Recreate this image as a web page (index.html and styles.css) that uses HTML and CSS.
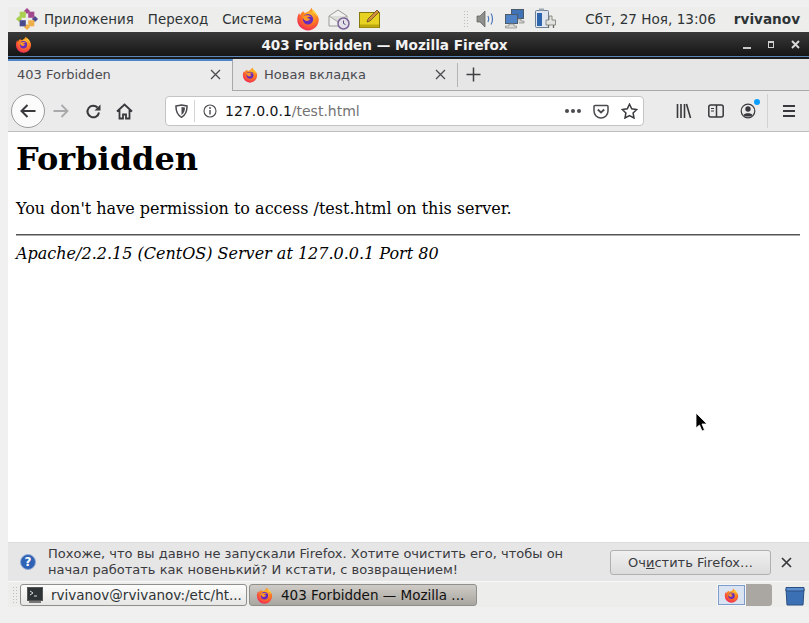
FILE: index.html
```html
<!DOCTYPE html>
<html lang="ru">
<head>
  <meta charset="UTF-8" />
  <title>403 Forbidden — Mozilla Firefox</title>
  <link rel="stylesheet" href="styles.css">
</head>
<body>
  <svg class="defs" width="0" height="0">
    <defs>
      <radialGradient id="ffbody" cx="0.6" cy="0.3" r="0.85">
        <stop offset="0" stop-color="#ffbd2e"/>
        <stop offset="0.45" stop-color="#ff7a1f"/>
        <stop offset="0.8" stop-color="#f2344f"/>
        <stop offset="1" stop-color="#e0287e"/>
      </radialGradient>
      <symbol id="firefox" viewBox="0 0 24 24">
        <path d="M15.5 .8c.6 2.4 2 3 3.6 4.6 2.3 2.2 3.6 4.600 3.600 7.400a10.700 10.700 0 0 1-21.400 0c0-2.700.6-4.800 1.900-6.800.1 1 .5 1.700 1.100 2.200.4-1.900 1.600-3.200 3.300-4 .1 1 .5 1.600 1.200 1.800 2.800-.6 5.300-2.400 6.700-5.200z" fill="url(#ffbody)"/>
        <path d="M16.500 2.500c2.800 2 5 5 4.900 8.300-1-2.600-2.700-4.200-4.500-5-.3-1.200-.6-2.200-.4-3.300z" fill="#ffd53d"/>
        <circle cx="12" cy="12.300" r="5.200" fill="#6a2bbd"/>
        <path d="M7 9.500c2.500-1.500 6.500-1.800 8.500.5-1.800-.6-3.500-.2-4.500 1 1.500.2 2.500.6 3 1.300-1 1.800-4 2.200-5.500.8C7.300 12 6.800 10.800 7 9.500z" fill="#ff9a24"/>
      </symbol>
    </defs>
  </svg>

  <div class="panel top-panel">
    <div class="menus">
      <svg class="centos" width="22" height="22" viewBox="0 0 18 18">
        <path d="M9 0l2.500 2.500L9 5 6.500 2.500z" fill="#a2488f"/>
        <path d="M18 9l-2.500 2.500L13 9l2.500-2.500z" fill="#4a4a8c"/>
        <path d="M9 18l-2.500-2.500L9 13l2.500 2.500z" fill="#efb04a"/>
        <path d="M0 9l2.500-2.500L5 9l-2.500 2.500z" fill="#a9d04e"/>
        <rect x="3" y="3" width="5" height="5" fill="#a9d04e"/>
        <rect x="10" y="3" width="5" height="5" fill="#a2488f"/>
        <rect x="3" y="10" width="5" height="5" fill="#4a4a8c"/>
        <rect x="10" y="10" width="5" height="5" fill="#efb04a"/>
      </svg>
      <span class="menu">Приложения</span>
      <span class="menu">Переход</span>
      <span class="menu">Система</span>
    </div>
    <div class="launchers">
      <svg width="24" height="24"><use href="#firefox"/></svg>
      <svg width="24" height="24" viewBox="0 0 24 24">
        <path d="M2 9l9-6 9 6v10H2z" fill="#f1f1ef" stroke="#9b9b98"/>
        <path d="M2 9l9 6 9-6" fill="#dcdcd8" stroke="#a8a8a4"/>
        <circle cx="16.500" cy="16.500" r="5.500" fill="#e4e0ea" stroke="#7b6496" stroke-width="1.500"/>
        <path d="M16.500 13.500v3l2 1" fill="none" stroke="#5d4a78"/>
      </svg>
      <svg width="24" height="24" viewBox="0 0 24 24">
        <rect x="1.500" y="5.500" width="20" height="15" fill="#e8d221" stroke="#86770f"/>
        <rect x="2" y="17.500" width="19" height="3" fill="#bca90d"/>
        <path d="M9 15l1-3 9-9 2 2-9 9z" fill="#d38f3a" stroke="#5e4a22" stroke-width=".8"/>
      </svg>
    </div>
    <div class="tray">
      <span class="grip"></span>
      <svg width="22" height="22" viewBox="0 0 22 22">
        <path d="M3 8h3l5-5v16l-5-5H3z" fill="#8e8e8b" stroke="#5c5c5a" stroke-width=".7"/>
        <path d="M14 8c1 2 1 4 0 6M17 5.500c2 3 2 8 0 11" fill="none" stroke="#4f77b8" stroke-width="1.200"/>
      </svg>
      <svg width="24" height="22" viewBox="0 0 24 22">
        <rect x="8.500" y="1.500" width="12" height="9" fill="#3f73b5" stroke="#4d5a6c"/>
        <path d="M12 11h6v2h3v2h-5" fill="#d5d5d2" stroke="#85857f" stroke-width=".7"/>
        <rect x="2.500" y="6.500" width="12" height="9" fill="#4f83c5" stroke="#4d5a6c"/>
        <path d="M6 16h5v2h2.500v2H2.500v-2H6z" fill="#dadad7" stroke="#85857f" stroke-width=".7"/>
      </svg>
      <svg width="24" height="24" viewBox="0 0 24 24">
        <rect x="1.500" y="3.500" width="13" height="17" rx="1" fill="#dfe6ef" stroke="#6e7f93"/>
        <rect x="3" y="6" width="5" height="13" fill="#2d66ad"/>
        <rect x="5" y="1.500" width="5" height="2" fill="#9aa6b4"/>
        <path d="M15 9h3v4h3.500v5H12v-5h3z" fill="#e2e2df" stroke="#77776f" stroke-width=".8"/>
        <path d="M14.500 18v3M19.500 18v3" stroke="#6a6a64" stroke-width="1.300"/>
      </svg>
      <span class="clock">Сбт, 27 Ноя, 13:06</span>
      <span class="user">rvivanov</span>
    </div>
  </div>

  <div class="window">
    <div class="titlebar">
      <svg class="title-icon" width="17" height="17"><use href="#firefox"/></svg>
      <span class="title-text">403 Forbidden — Mozilla Firefox</span>
      <div class="wm-buttons">
        <span class="wm-min"></span>
        <span class="wm-max"></span>
        <svg width="9" height="9" viewBox="0 0 9 9"><path d="M1 1l7 7M8 1L1 8" stroke="#d8d8d8" stroke-width="2"/></svg>
      </div>
    </div>

    <div class="tabbar">
      <div class="tab active">
        <span class="tab-label">403 Forbidden</span>
        <svg class="tab-close" width="11" height="11" viewBox="0 0 11 11"><path d="M1 1l9 9M10 1l-9 9" stroke="#4a4a4f" stroke-width="1.300"/></svg>
      </div>
      <div class="tab">
        <svg width="16" height="16"><use href="#firefox"/></svg>
        <span class="tab-label">Новая вкладка</span>
        <svg class="tab-close" width="11" height="11" viewBox="0 0 11 11"><path d="M1 1l9 9M10 1l-9 9" stroke="#4a4a4f" stroke-width="1.300"/></svg>
      </div>
      <span class="tab-sep"></span>
      <svg class="new-tab" width="15" height="15" viewBox="0 0 15 15"><path d="M7.500 .5v14M.5 7.500h14" stroke="#3f3f44" stroke-width="1.500"/></svg>
    </div>

    <div class="toolbar">
      <div class="back">
        <svg width="18" height="18" viewBox="0 0 18 18"><path d="M16.500 9H2.500M8.500 3L2.500 9l6 6" fill="none" stroke="#38383d" stroke-width="2"/></svg>
      </div>
      <svg class="forward" width="18" height="18" viewBox="0 0 18 18"><path d="M1.500 9h14M9.500 3l6 6-6 6" fill="none" stroke="#a9a9ab" stroke-width="1.800"/></svg>
      <svg class="reload" width="17" height="17" viewBox="0 0 17 17"><path d="M14 9.500A5.800 5.800 0 1 1 12.500 4.500" fill="none" stroke="#38383d" stroke-width="2"/><path d="M15.500 1.500v6h-6z" fill="#38383d"/></svg>
      <svg class="home" width="17" height="17" viewBox="0 0 17 17"><path d="M1 8.500l7.500-7 7.500 7M3.500 7v8.500h3.500v-4h3v4h3.500V7" fill="none" stroke="#38383d" stroke-width="1.800"/></svg>
      <div class="urlbar">
        <svg class="shield" width="13" height="14" viewBox="0 0 13 14"><path d="M1 2l5.500-1L12 2c.2 5-1.200 9-5.500 11.300C2.200 11 .8 7 1 2z" fill="none" stroke="#4a4a4f" stroke-width="1.500"/><path d="M6.500 3l3.500.6c0 3.300-1 5.600-3.500 7.300z" fill="#4a4a4f"/></svg>
        <span class="url-sep"></span>
        <svg class="info" width="14" height="14" viewBox="0 0 14 14"><circle cx="7" cy="7" r="6" fill="none" stroke="#4a4a4f" stroke-width="1.100"/><path d="M7 6v4.500" stroke="#4a4a4f" stroke-width="1.400"/><circle cx="7" cy="4" r=".9" fill="#4a4a4f"/></svg>
        <span class="url"><span class="host">127.0.0.1</span>/test.html</span>
        <span class="dots"><i></i><i></i><i></i></span>
        <svg class="pocket" width="16" height="15" viewBox="0 0 16 15"><path d="M2 1.500h12a1 1 0 0 1 1 1V7a7 7 0 0 1-14 0V2.500a1 1 0 0 1 1-1z" fill="none" stroke="#4a4a4f" stroke-width="1.500"/><path d="M4.800 5.500L8 8.500l3.200-3" fill="none" stroke="#4a4a4f" stroke-width="1.800"/></svg>
        <svg class="star" width="17" height="16" viewBox="0 0 17 16"><path d="M8.500 1.200l2.200 4.600 5 .7-3.600 3.500.9 5-4.500-2.400L4 15l.9-5L1.300 6.500l5-.7z" fill="none" stroke="#38383d" stroke-width="1.500"/></svg>
      </div>
      <svg class="library" width="16" height="16" viewBox="0 0 16 16"><path d="M1.500 1v14M5 1v14M8.500 1v14M10.500 1l4 14" stroke="#38383d" stroke-width="1.600"/></svg>
      <svg class="sidebar-btn" width="16" height="14" viewBox="0 0 16 14"><rect x=".8" y="1" width="14.400" height="12" rx="2" fill="none" stroke="#38383d" stroke-width="1.500"/><path d="M8.500 1v12" stroke="#38383d" stroke-width="1.500"/><path d="M3 4.500h3M3 7h3" stroke="#38383d"/></svg>
      <div class="account">
        <svg width="16" height="16" viewBox="0 0 16 16"><circle cx="8" cy="8" r="6.800" fill="none" stroke="#38383d" stroke-width="1.200"/><circle cx="8" cy="6" r="2.700" fill="#38383d"/><path d="M3.500 12c1-2.500 8-2.500 9 0-1.500 2-7.500 2-9 0z" fill="#38383d"/></svg>
        <span class="badge"></span>
      </div>
      <span class="toolbar-sep"></span>
      <div class="hamburger"><i></i><i></i><i></i></div>
    </div>

    <div class="content">
      <h1>Forbidden</h1>
      <p>You don't have permission to access /test.html on this server.</p>
      <hr>
      <address>Apache/2.2.15 (CentOS) Server at 127.0.0.1 Port 80</address>
      <svg class="cursor" width="14" height="21" viewBox="0 0 14 21"><path d="M1 1v15l3.500-3 2.500 6 2.500-1-2.500-6h5z" fill="#000" stroke="#fff" stroke-width=".8"/></svg>
    </div>

    <div class="notice">
      <svg class="help" width="16" height="16" viewBox="0 0 16 16"><circle cx="8" cy="8" r="7.500" fill="#2f62b5" stroke="#8fa9d4"/><text x="8" y="12" text-anchor="middle" class="help-mark">?</text></svg>
      <p class="notice-text">Похоже, что вы давно не запускали Firefox. Хотите очистить его, чтобы он начал работать как новенький? И кстати, с возвращением!</p>
      <button class="notice-btn">Оч<span class="mnemonic">и</span>стить Firefox…</button>
      <svg class="notice-close" width="11" height="11" viewBox="0 0 11 11"><path d="M1 1l9 9M10 1l-9 9" stroke="#38383d" stroke-width="1.700"/></svg>
    </div>
  </div>

  <div class="panel bottom-panel">
    <span class="grip"></span>
    <div class="task">
      <svg width="16" height="16" viewBox="0 0 16 16"><rect x=".5" y=".5" width="15" height="13" fill="#2e3436" stroke="#555"/><path d="M3 4l3 2-3 2M7 9h3" fill="none" stroke="#ddd"/><rect x="2" y="14" width="12" height="2" fill="#777"/></svg>
      <span>rvivanov@rvivanov:/etc/ht...</span>
    </div>
    <div class="task current">
      <svg width="17" height="17"><use href="#firefox"/></svg>
      <span>403 Forbidden — Mozilla ...</span>
    </div>
    <div class="pager">
      <div class="workspace on"><svg width="15" height="15"><use href="#firefox"/></svg></div>
      <div class="workspace"></div>
    </div>
    <svg class="trash" width="20" height="21" viewBox="0 0 20 21"><path d="M1 4h18l-1 16H2z" fill="#3c70b4" stroke="#2a4f82"/><path d="M1 2.500h18V6H1z" fill="#5b8fd0" stroke="#2a4f82"/></svg>
  </div>
</body>
</html>
```
FILE: styles.css
```css
html, body {
  margin: 0;
  height: 100%;
}
body {
  box-sizing: border-box;
  width: 809px;
  height: 623px;
  padding: 7px 0 0 8px;
  background: #f0f0f0;
  font-family: "DejaVu Sans", sans-serif;
  overflow: hidden;
  position: relative;
}
.defs {
  position: absolute;
}
svg {
  flex: none;
  display: block;
}

/* panels */
.panel {
  display: flex;
  align-items: center;
  background: #ededeb;
  color: #2e3436;
  font-size: 13.4px;
}
.top-panel {
  height: 24px;
}
.menus {
  display: flex;
  align-items: center;
  padding-left: 8px;
}
.centos {
  margin-right: 6px;
}
.menu {
  margin-right: 14px;
}
.launchers {
  display: flex;
  align-items: center;
  gap: 7px;
}
.tray {
  display: flex;
  align-items: center;
  margin-left: auto;
  padding-right: 9px;
  font-size: 13.6px;
}
.grip {
  width: 6px;
  height: 18px;
  background-image: radial-gradient(#bdbdb9 1px, transparent 1px);
  background-size: 3px 3px;
}
.tray svg {
  margin-left: 5px;
}
.tray svg + svg {
  margin-left: 7px;
}
.clock {
  margin-left: 27px;
}
.user {
  margin-left: 18px;
  font-weight: bold;
}

/* window */
.window {
  display: flex;
  flex-direction: column;
  height: 550px;
  margin-top: 1px;
}
.titlebar {
  display: flex;
  align-items: center;
  height: 27px;
  flex: none;
  position: relative;
  background: linear-gradient(#3a3a3a, #141414);
  border-bottom: 2px solid #1c1c1c;
  box-shadow: inset 0 -1px 0 #5b86b8;
  box-sizing: border-box;
  color: #f2f2f2;
  font-size: 13.6px;
  font-weight: bold;
}
.title-icon {
  margin-left: 7px;
}
.title-text {
  position: absolute;
  left: 0;
  right: 0;
  text-align: center;
  transform: translateX(-24px);
}
.wm-buttons {
  display: flex;
  align-items: center;
  gap: 17px;
  margin-left: auto;
  margin-right: 9px;
}
.wm-min {
  width: 8px;
  height: 2px;
  margin-top: 6px;
  background: #c8c8c8;
}
.wm-max {
  width: 4px;
  height: 4px;
  border: 1px solid #d0d0d0;
  border-top-width: 2px;
}

.tabbar {
  display: flex;
  align-items: center;
  height: 32px;
  flex: none;
  box-sizing: border-box;
  background: #e6e6e6;
  border-bottom: 1px solid #a8a8a8;
  color: #4a4a4f;
  font-size: 13px;
}
.tab {
  display: flex;
  align-items: center;
  box-sizing: border-box;
  width: 224px;
  height: 31px;
  padding: 0 11px 0 9px;
}
.tab + .tab {
  padding-left: 9px;
  gap: 6px;
}
.tab.active {
  width: 225px;
  height: 32px;
  padding-bottom: 3px;
  border-top: 2px solid #4a86c8;
  border-right: 1px solid #a8a8a8;
  background: #ebebeb;
}
.tab-close {
  margin-left: auto;
}
.tab-sep {
  width: 1px;
  height: 24px;
  background: #b4b4b4;
}
.new-tab {
  margin-left: 8px;
}

.toolbar {
  display: flex;
  align-items: center;
  flex: none;
  height: 41px;
  box-sizing: border-box;
  background: #ebebeb;
  border-bottom: 1px solid #bdbdbd;
  padding-left: 3px;
}
.back {
  display: flex;
  align-items: center;
  justify-content: center;
  box-sizing: border-box;
  width: 34px;
  height: 34px;
  border: 1px solid #9a9a9a;
  border-radius: 50%;
  background: #fbfbfb;
}
.forward {
  margin-left: 7px;
}
.reload {
  margin-left: 15px;
}
.home {
  margin-left: 14px;
}
.urlbar {
  display: flex;
  align-items: center;
  box-sizing: border-box;
  width: 479px;
  height: 30px;
  margin-left: 32px;
  padding: 0 5px 0 9px;
  background: #fff;
  border: 1px solid #c4c4c4;
  border-radius: 4px;
  font-size: 14px;
  color: #737373;
}
.url-sep {
  width: 1px;
  height: 22px;
  margin: 0 8px 0 6px;
  background: #d4d4d4;
}
.url {
  margin-left: 8px;
}
.host {
  color: #111;
}
.dots {
  display: flex;
  gap: 2px;
  margin-left: auto;
}
.dots i {
  width: 4px;
  height: 4px;
  border-radius: 50%;
  background: #4a4a4f;
}
.pocket {
  margin-left: 12px;
}
.star {
  margin-left: 12px;
}
.library {
  margin-left: 32px;
}
.sidebar-btn {
  margin-left: 16px;
}
.account {
  position: relative;
  margin-left: 16px;
}
.badge {
  position: absolute;
  top: -4px;
  right: -4px;
  width: 6px;
  height: 6px;
  border-radius: 50%;
  background: #0a9eff;
}
.toolbar-sep {
  width: 1px;
  height: 34px;
  margin-left: 11px;
  background: #d2d2d2;
}
.hamburger {
  display: flex;
  flex-direction: column;
  gap: 3px;
  margin-left: 15px;
}
.hamburger i {
  width: 12px;
  height: 2px;
  background: #38383d;
}

/* page */
.content {
  flex: 1;
  position: relative;
  background: #fff;
  padding: 8px;
  font-family: "DejaVu Serif", serif;
  font-size: 16px;
  color: #000;
}
.content h1 {
  margin: 0 0 21px;
  font-size: 32px;
  line-height: 38px;
}
.content p {
  margin: 0 0 16px;
  line-height: 19px;
}
.content hr {
  margin: 0 1px 8px 0;
  border: 0;
  border-top: 1px solid #555;
  border-bottom: 1px solid #aaa;
}
.content address {
  line-height: 19px;
}
.cursor {
  position: absolute;
  left: 687px;
  top: 280px;
}

.notice {
  display: flex;
  align-items: center;
  flex: none;
  height: 40px;
  box-sizing: border-box;
  padding-left: 12px;
  background: #e6e6e6;
  border-top: 1px solid #dcdcdc;
  border-bottom: 1px solid #f8f8f8;
  color: #3a3a3f;
  font-size: 13px;
}
.help-mark {
  font: bold 12px "DejaVu Sans", sans-serif;
  fill: #fff;
}
.notice-text {
  width: 540px;
  margin: 0 0 0 12px;
  line-height: 16px;
}
.notice-btn {
  width: 161px;
  height: 25px;
  margin-left: 22px;
  padding: 0;
  border: 1px solid #b0b0b0;
  border-radius: 3px;
  background: linear-gradient(#f0f0f0, #dcdcdc);
  color: #3a3a3f;
  font: 13px "DejaVu Sans", sans-serif;
}
.mnemonic {
  text-decoration: underline;
}
.notice-close {
  margin-left: 10px;
}

/* bottom panel */
.bottom-panel {
  height: 24px;
  font-size: 13.5px;
  padding: 1px 0 0 4px;
}
.task {
  display: flex;
  align-items: center;
  gap: 8px;
  box-sizing: border-box;
  width: 227px;
  height: 22px;
  margin-left: 2px;
  padding: 0 6px;
  overflow: hidden;
  white-space: nowrap;
  border: 1px solid #8f8f8b;
  border-radius: 3px;
  background: linear-gradient(#fdfdfd, #e6e6e4);
}
.task.current {
  width: 228px;
  margin-left: 2px;
  background: linear-gradient(#cfcbc6, #a9a59f);
  color: #111;
}
.pager {
  display: flex;
  width: 55px;
  height: 22px;
  margin-left: 240px;
  border-radius: 0 3px 3px 0;
  background: #aaa6a1;
}
.workspace {
  flex: 1;
  display: flex;
  align-items: center;
  justify-content: center;
}
.workspace.on {
  box-sizing: border-box;
  border: 1px solid #f4f6fa;
  outline: 1px solid #7d9cc8;
  outline-offset: -2px;
  background: #d9e3f2;
}
.trash {
  margin-left: 13px;
}
```
